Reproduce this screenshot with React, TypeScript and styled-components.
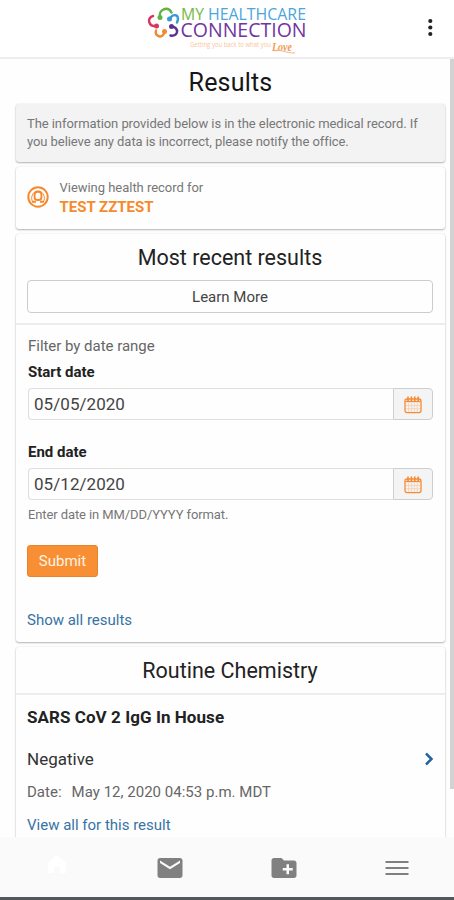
import React from "react";
import styled, { createGlobalStyle } from "styled-components";

const GlobalStyle = createGlobalStyle`
  * { box-sizing: border-box; }
  body { margin: 0; background: #fefefe; font-family: Roboto, "Liberation Sans", sans-serif; color: #222; }
  button, input { font-family: inherit; }
`;

const Screen = styled.div`
  height: 900px;
  display: flex;
  flex-direction: column;
  overflow: hidden;
`;

const Header = styled.header`
  height: 59px;
  flex: none;
  display: flex;
  justify-content: flex-end;
  border-bottom: 2px solid #eeeeee;
  background: #fff;
`;

const Logo = styled.svg`
  width: 165px;
  height: 56px;
  flex: none;
  margin-right: 106px;
`;

const MenuButton = styled.button`
  width: 38px;
  height: 55px;
  padding: 0;
  border: 0;
  background: none;
`;

const Viewport = styled.div`
  flex: 1;
  min-height: 0;
  display: flex;
  overflow: hidden;
`;

const Main = styled.main`
  flex: 1;
  padding: 0 5px 0 16px;
`;

const ScrollThumb = styled.div`
  width: 4px;
  height: 730px;
  background: #d2d2d2;
`;

const PageTitle = styled.h1`
  margin: 0;
  height: 45px;
  font-size: 25px;
  line-height: 47px;
  font-weight: 400;
  letter-spacing: 0.2px;
  text-align: center;
  color: #161616;
`;

const Card = styled.section<{ $height: number; $gap?: number; $muted?: boolean }>`
  height: ${(p) => p.$height}px;
  margin-bottom: ${(p) => p.$gap ?? 5}px;
  border-radius: 3px;
  background: ${(p) => (p.$muted ? "#f3f3f3" : "#fefefe")};
  box-shadow: 0 1px 2px rgba(0, 0, 0, 0.28), 0 0 2px rgba(0, 0, 0, 0.1);
`;

const Notice = styled.p`
  margin: 0;
  padding: 11px 0 0 11px;
  font-size: 13px;
  line-height: 18px;
  letter-spacing: -0.065px;
  white-space: nowrap;
  color: #777;
`;

const Person = styled.div`
  display: flex;
  align-items: center;
  height: 100%;
  padding: 0 0 2px 11px;
  gap: 10.5px;
`;

const PersonLabel = styled.div`
  font-size: 13px;
  line-height: 20px;
  letter-spacing: -0.03px;
  color: #777;
`;

const PersonName = styled.div`
  font-size: 15px;
  line-height: 19px;
  font-weight: 700;
  letter-spacing: 0;
  color: #f68a2c;
`;

const CardHead = styled.div<{ $height: number }>`
  height: ${(p) => p.$height}px;
  padding: 0 12px 0 11px;
  border-bottom: 2px solid #ededed;
`;

const CardTitle = styled.h2`
  margin: 0;
  font-size: 21.5px;
  line-height: 47px;
  height: 46px;
  font-weight: 400;
  letter-spacing: 0;
  text-align: center;
  color: #222;
`;

const LearnButton = styled.button`
  display: block;
  width: 100%;
  height: 33px;
  padding: 0;
  border: 1.5px solid #ccc;
  border-radius: 4px;
  background: #fefefe;
  font-size: 15px;
  letter-spacing: 0;
  color: #444;
`;

const Form = styled.form`
  padding: 9px 12px 0 11px;
`;

const Legend = styled.div`
  padding-left: 1px;
  font-size: 15px;
  line-height: 24px;
  letter-spacing: -0.03px;
  color: #666;
`;

const Label = styled.label`
  display: block;
  padding-left: 1px;
  font-size: 15px;
  line-height: 29px;
  font-weight: 700;
  color: #222;
`;

const Field = styled.div<{ $gap: number }>`
  display: flex;
  height: 32px;
  margin: 1px 0 ${(p) => p.$gap}px 1px;
`;

const DateInput = styled.input`
  flex: 1;
  min-width: 0;
  padding: 0 5px 1px;
  border: 1px solid #dedede;
  border-right: 0;
  border-radius: 4px 0 0 4px;
  background: #fefefe;
  font-size: 17px;
  letter-spacing: 0.05px;
  color: #444;
`;

const DateButton = styled.button`
  width: 40px;
  padding: 1px 0 0;
  display: grid;
  place-items: center;
  border: 1px solid #cfcfcf;
  border-radius: 0 4px 4px 0;
  background: #f4f4f4;
`;

const Hint = styled.div`
  padding-left: 1px;
  font-size: 13px;
  line-height: 18px;
  letter-spacing: -0.1px;
  color: #777;
`;

const SubmitButton = styled.button`
  display: block;
  width: 71px;
  height: 32px;
  margin: 21px 0 31px;
  padding: 0;
  border: 1px solid #e8842a;
  border-radius: 3px;
  background: #f88f34;
  font-size: 15px;
  letter-spacing: 0;
  color: #fff3e6;
`;

const Link = styled.a`
  display: block;
  font-size: 15px;
  line-height: 24px;
  letter-spacing: 0;
  color: #3673a5;
`;

const Results = styled.div`
  padding: 10px 11px;
`;

const TestName = styled.h3`
  margin: 0;
  font-size: 17px;
  line-height: 24px;
  font-weight: 700;
  letter-spacing: 0.06px;
  color: #222;
`;

const ResultRow = styled.div`
  display: flex;
  align-items: center;
  justify-content: space-between;
  height: 24px;
  margin-top: 18px;
  font-size: 17px;
  color: #333;
`;

const ResultDate = styled.div`
  display: flex;
  gap: 10px;
  margin: 9px 0;
  font-size: 15px;
  line-height: 24px;
  letter-spacing: 0.02px;
  color: #666;
`;

const TabBar = styled.nav`
  height: 63px;
  flex: none;
  display: grid;
  grid-template-columns: repeat(4, 1fr);
  background: #fafafa;
  border-bottom: 3px solid #53575a;
`;

const Tab = styled.button`
  padding: 2px 0 0;
  display: grid;
  place-items: center;
  border: 0;
  background: none;
  color: #808080;
`;

const CalendarIcon = () => (
  <svg width="18" height="18" viewBox="0 0 18 18" fill="none" stroke="#f28c3a">
    <path d="M4.6 6.5V16M7.5 6.5V16M10.4 6.5V16M13.3 6.5V16M1 9.5h16M1 12.7h16" stroke="#f9cda8" strokeWidth=".8" />
    <rect x="1" y="3" width="16" height="13.6" rx="2" strokeWidth="1.3" />
    <path d="M1.5 5.5h15" strokeWidth="1.3" />
    <path d="M4 1v4M7.4 1v4M10.8 1v4M14.2 1v4" strokeWidth="1.6" strokeLinecap="round" />
  </svg>
);

const DateField = ({ id, value, gap }: { id: string; value: string; gap: number }) => (
  <Field $gap={gap}>
    <DateInput id={id} defaultValue={value} />
    <DateButton type="button" aria-label="Choose date"><CalendarIcon /></DateButton>
  </Field>
);

const people = [
  { color: "#62b146", x: 160, y: 17.5, arc: "M160 17C158 10 168 5 171.500 12.500" },
  { color: "#369bd7", x: 169.5, y: 19, arc: "M170 19C172 13 181 14 177 22.500" },
  { color: "#5b3391", x: 171.5, y: 26.5, arc: "M172 26.500C179 27 179 37 170.500 35.500" },
  { color: "#f18a35", x: 164.5, y: 31.5, arc: "M164.500 32C163 39 154 37 156 30.500" },
  { color: "#d83760", x: 156.5, y: 26, arc: "M156 26C149 27 146 18 153 16" },
];

const BrandLogo = () => (
  <Logo viewBox="145 0 165 56" role="img" aria-label="My Healthcare Connection">
    {people.map((p) => (
      <g key={p.color}>
        <path d={p.arc} fill="none" stroke={p.color} strokeWidth="2.5" strokeLinecap="round" />
        <circle cx={p.x} cy={p.y} r="2.5" fill={p.color} />
      </g>
    ))}
    <g fontFamily="Open Sans, Noto Sans, sans-serif">
      <text x="181" y="20" fontSize="16.4" fill="#76b943" textLength="23" lengthAdjust="spacingAndGlyphs">MY</text>
      <text x="208" y="20" fontSize="16.4" fill="#4aa6dc" textLength="98" lengthAdjust="spacingAndGlyphs">HEALTHCARE</text>
      <text x="180.500" y="36.500" fontSize="20" fill="#71359e" textLength="126" lengthAdjust="spacingAndGlyphs">CONNECTION</text>
      <text x="190" y="46.500" fontSize="6.5" fill="#fac49a" textLength="81" lengthAdjust="spacingAndGlyphs">Getting you back to what you</text>
    </g>
    <text x="272" y="50.500" fontFamily="Liberation Serif, serif" fontStyle="italic" fontWeight="700" fontSize="13" fill="#f49a55" textLength="20" lengthAdjust="spacingAndGlyphs">Love</text>
    <path d="M275 51c6-2 10 2 20 2" fill="none" stroke="#f8b47e" />
  </Logo>
);

export default function App() {
  return (
    <Screen>
      <GlobalStyle />
      <Header>
        <BrandLogo />
        <MenuButton aria-label="More options">
          <svg width="38" height="55" fill="#222">
            <circle cx="14.300" cy="21" r="2.100" /><circle cx="14.300" cy="27.500" r="2.100" /><circle cx="14.300" cy="34" r="2.100" />
          </svg>
        </MenuButton>
      </Header>
      <Viewport>
        <Main>
          <PageTitle>Results</PageTitle>
          <Card $height={58} $muted>
            <Notice>
              The information provided below is in the electronic medical record. If<br />
              you believe any data is incorrect, please notify the office.
            </Notice>
          </Card>
          <Card $height={62}>
            <Person>
              <svg width="22" height="22" viewBox="0 0 22 22" fill="none" stroke="#f58a2c">
                <circle cx="11" cy="11" r="9.700" strokeWidth="2" />
                <path d="M5.500 15.500C3.300 12 5.500 5 11 5s7.700 7 5.500 10.500" strokeWidth="1" />
                <rect x="7.600" y="5.800" width="6.800" height="8.200" rx="2.800" strokeWidth="1.900" />
                <path d="M5 15.700h4M13 15.700h4" strokeWidth="2" />
              </svg>
              <div>
                <PersonLabel>Viewing health record for</PersonLabel>
                <PersonName>TEST ZZTEST</PersonName>
              </div>
            </Person>
          </Card>
          <Card $height={408}>
            <CardHead $height={91}>
              <CardTitle>Most recent results</CardTitle>
              <LearnButton>Learn More</LearnButton>
            </CardHead>
            <Form>
              <Legend>Filter by date range</Legend>
              <Label htmlFor="start">Start date</Label>
              <DateField id="start" value="05/05/2020" gap={18} />
              <Label htmlFor="end">End date</Label>
              <DateField id="end" value="05/12/2020" gap={6} />
              <Hint>Enter date in MM/DD/YYYY format.</Hint>
              <SubmitButton type="button">Submit</SubmitButton>
              <Link>Show all results</Link>
            </Form>
          </Card>
          <Card $height={230}>
            <CardHead $height={48}>
              <CardTitle>Routine Chemistry</CardTitle>
            </CardHead>
            <Results>
              <TestName>SARS CoV 2 IgG In House</TestName>
              <ResultRow>
                Negative
                <svg width="10" height="14" viewBox="0 0 10 14" fill="none" stroke="#2464a5" strokeWidth="2.500"><path d="M2 1.500L7.500 7L2 12.500" /></svg>
              </ResultRow>
              <ResultDate><span>Date:</span><span>May 12, 2020 04:53 p.m. MDT</span></ResultDate>
              <Link>View all for this result</Link>
            </Results>
          </Card>
        </Main>
        <ScrollThumb />
      </Viewport>
      <TabBar>
        <Tab aria-label="Home">
          <svg width="24" height="26" viewBox="0 0 24 26" fill="#fff"><path d="M12 0l9 8v10h-6v-6H9v6H3V8z" /></svg>
        </Tab>
        <Tab aria-label="Messages">
          <svg width="30" height="30" viewBox="0 0 24 24" fill="currentColor"><path d="M20 4H4c-1.100 0-2 .9-2 2v12c0 1.100.9 2 2 2h16c1.100 0 2-.9 2-2V6c0-1.100-.9-2-2-2zm0 4l-8 5-8-5V6l8 5 8-5v2z" /></svg>
        </Tab>
        <Tab aria-label="Records">
          <svg width="30" height="30" viewBox="0 0 24 24" fill="currentColor"><path d="M20 6h-8l-2-2H4c-1.100 0-2 .9-2 2v12c0 1.100.9 2 2 2h16c1.100 0 2-.9 2-2V8c0-1.100-.9-2-2-2zm-1 8h-3v3h-2v-3h-3v-2h3V9h2v3h3v2z" /></svg>
        </Tab>
        <Tab aria-label="Menu">
          <svg width="24" height="16" stroke="currentColor" strokeWidth="2"><path d="M.5 2h23M.5 8h23M.5 14h23" /></svg>
        </Tab>
      </TabBar>
    </Screen>
  );
}
